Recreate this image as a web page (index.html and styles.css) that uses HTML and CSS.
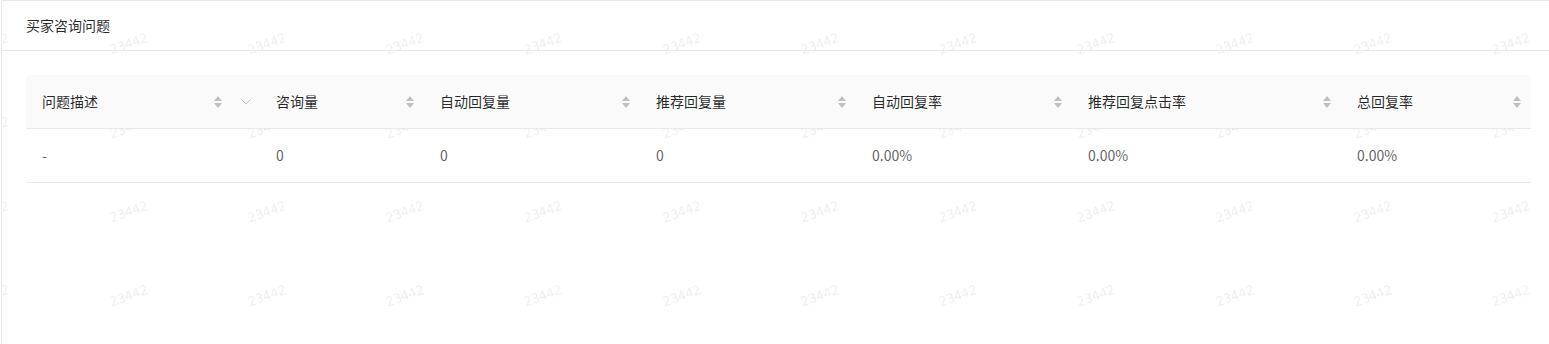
FILE: index.html
```html
<!DOCTYPE html>
<html lang="zh-CN">
<head>
  <meta charset="UTF-8" />
  <meta name="viewport" content="width=device-width, initial-scale=1" />
  <title>买家咨询问题</title>
  <link rel="stylesheet" href="styles.css">
</head>
<body>

  <div class="card">
    <div class="watermark" id="watermark"></div>

    <div class="card-head">买家咨询问题</div>

    <div class="card-body">
      <table class="data-table">
        <colgroup>
          <col style="width:234px">
          <col style="width:164px">
          <col style="width:216px">
          <col style="width:216px">
          <col style="width:216px">
          <col style="width:269px">
          <col style="width:190px">
        </colgroup>
        <thead>
          <tr>
            <th class="with-filter">
              <div class="th-inner">
                <span class="th-title">问题描述</span>
                <span class="sorter"></span>
                <span class="filter">
                  <svg width="10" height="6" viewBox="0 0 10 6"><path d="M0.5 0.5 L5 5 L9.5 0.5" fill="none" stroke="#bfbfbf" stroke-width="1"/></svg>
                </span>
              </div>
            </th>
            <th><div class="th-inner"><span class="th-title">咨询量</span><span class="sorter"></span></div></th>
            <th><div class="th-inner"><span class="th-title">自动回复量</span><span class="sorter"></span></div></th>
            <th><div class="th-inner"><span class="th-title">推荐回复量</span><span class="sorter"></span></div></th>
            <th><div class="th-inner"><span class="th-title">自动回复率</span><span class="sorter"></span></div></th>
            <th><div class="th-inner"><span class="th-title">推荐回复点击率</span><span class="sorter"></span></div></th>
            <th><div class="th-inner"><span class="th-title">总回复率</span><span class="sorter"></span></div></th>
          </tr>
        </thead>
        <tbody>
          <tr>
            <td>-</td>
            <td>0</td>
            <td>0</td>
            <td>0</td>
            <td>0.00%</td>
            <td>0.00%</td>
            <td>0.00%</td>
          </tr>
        </tbody>
      </table>
    </div>
  </div>

  <script>
    // up/down caret pair used by every sortable column
    const sorterSvg =
      '<svg width="8" height="12" viewBox="0 0 8 12">' +
      '<path d="M4 0 L8 5 L0 5 Z" fill="#bfbfbf"/>' +
      '<path d="M0 7 L8 7 L4 12 Z" fill="#bfbfbf"/>' +
      '</svg>';
    document.querySelectorAll('.sorter').forEach(el => el.innerHTML = sorterSvg);

    // repeat the account watermark over the whole card
    const mark = document.getElementById('watermark');
    const stepX = 138.25;
    const stepY = 84;
    for (let row = 0; row < 5; row++) {
      for (let col = 0; col < 13; col++) {
        const span = document.createElement('span');
        span.textContent = '23442';
        span.style.left = (-11.75 + col * stepX - 30) + 'px';
        span.style.top = (43 + row * stepY - 10) + 'px';
        mark.appendChild(span);
      }
    }
  </script>

</body>
</html>
```

FILE: styles.css
```css
html, body {
  margin: 0;
  overflow: hidden;
}

body {
  font-family: "Noto Sans CJK SC", "Liberation Sans", sans-serif;
  font-size: 14px;
  color: rgba(0, 0, 0, 0.65);
  background: #fff;
}

.card {
  position: relative;
  width: 1556px;
  height: 344px;
  margin-left: 1px;
  border: 1px solid #e8e8e8;
  border-bottom: none;
  border-radius: 2px 2px 0 0;
  box-sizing: border-box;
  background: #fff;
}

.watermark {
  position: absolute;
  inset: 0;
  overflow: hidden;
  pointer-events: none;
}

.watermark span {
  position: absolute;
  width: 60px;
  line-height: 20px;
  text-align: center;
  font-family: "DejaVu Sans", sans-serif;
  font-weight: 200;
  font-size: 12.5px;
  color: #e6e6e6;
  transform: rotate(-20deg);
  white-space: nowrap;
}

.card-head {
  height: 49px;
  line-height: 49px;
  padding: 0 24px;
  border-bottom: 1px solid #e8e8e8;
  color: rgba(0, 0, 0, 0.85);
}

.card-body {
  padding: 24px 24px;
}

.data-table {
  width: 1505px;
  table-layout: fixed;
  border-collapse: separate;
  border-spacing: 0;
}

.data-table th,
.data-table td {
  padding: 16px;
  line-height: 21px;
  text-align: left;
  border-bottom: 1px solid #e8e8e8;
}

.data-table th {
  position: relative;
  z-index: 1;
  background: #fafafa;
  font-weight: normal;
  color: rgba(0, 0, 0, 0.85);
  padding-right: 10px;
}

.data-table th:first-child { border-top-left-radius: 4px; }
.data-table th:last-child { border-top-right-radius: 4px; }

.data-table th.with-filter {
  padding-right: 0;
}

.th-inner {
  display: flex;
  align-items: center;
}

.th-title {
  flex: 1;
  white-space: nowrap;
}

.sorter {
  display: flex;
  width: 8px;
  height: 12px;
}

.filter {
  display: flex;
  align-items: center;
  justify-content: center;
  width: 28px;
  margin-left: 10px;
}
```
